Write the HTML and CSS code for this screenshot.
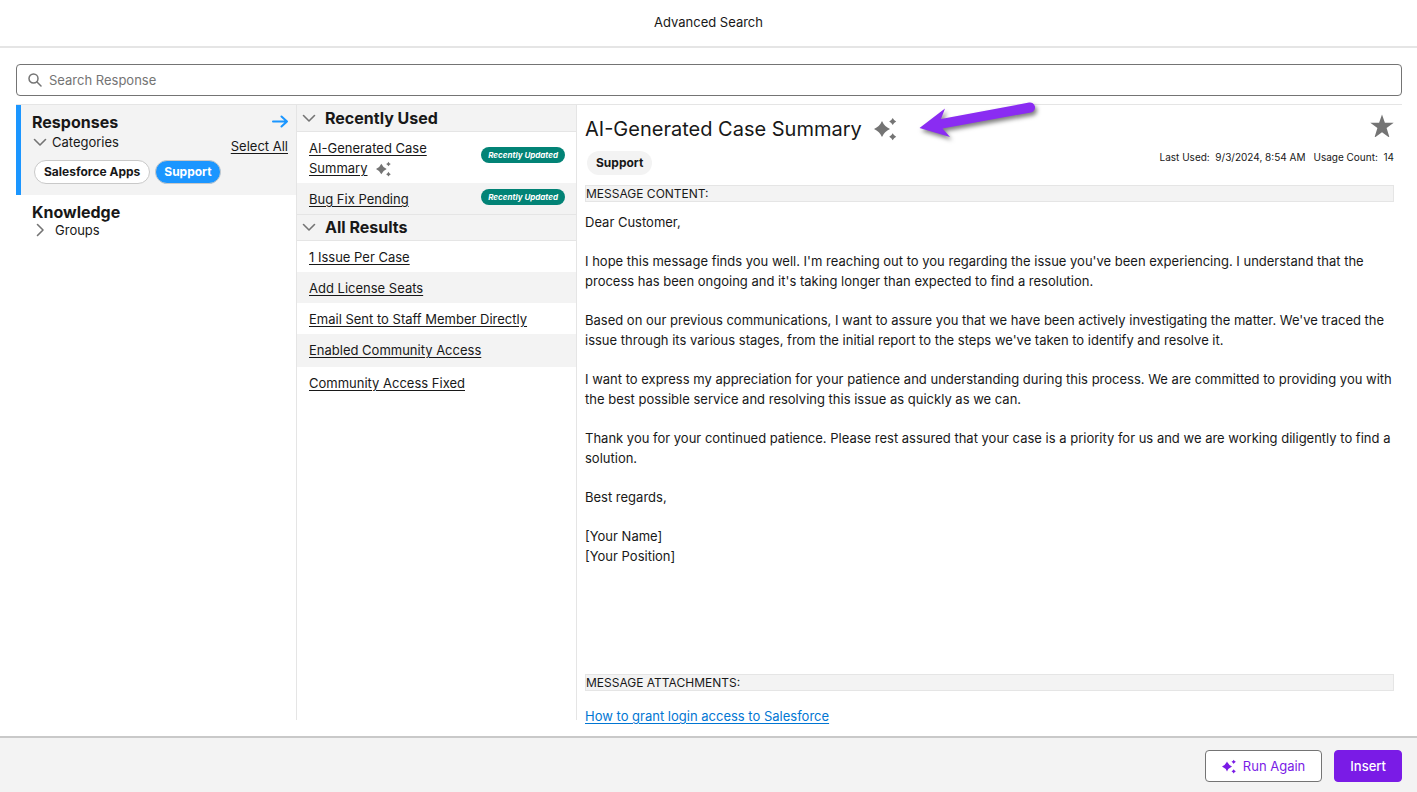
FILE: index.html
```html
<!DOCTYPE html>
<html lang="en">
<head>
<meta charset="utf-8">
<meta name="viewport" content="width=device-width, initial-scale=1">
<title>Advanced Search</title>
<link rel="stylesheet" href="styles.css">
</head>
<body>
<svg class="symbols" aria-hidden="true">
  <symbol id="sparkle" viewBox="0 0 24 24">
    <path d="M8 4Q10.400 9.600 16 12Q10.400 14.400 8 20Q5.600 14.400 0 12Q5.600 9.600 8 4ZM18.700 1Q19.800 3.400 22.200 4.500Q19.800 5.600 18.700 8Q17.600 5.600 15.200 4.500Q17.600 3.400 18.700 1ZM18.700 16.200Q19.800 18.600 22.200 19.700Q19.800 20.800 18.700 23.200Q17.600 20.800 15.200 19.700Q17.600 18.600 18.700 16.200Z"/>
  </symbol>
  <symbol id="chevron" viewBox="0 0 14 14">
    <path d="M1.500 4.500L7 10L12.500 4.500" fill="none" stroke="currentColor" stroke-width="1.600" stroke-linecap="round" stroke-linejoin="round"/>
  </symbol>
</svg>

<header class="header"><h1 class="header-title">Advanced Search</h1></header>

<main class="main">
  <label class="search">
    <svg class="search-icon" viewBox="0 0 14 14" aria-hidden="true"><circle cx="5.500" cy="5.500" r="4.500"/><path d="M9 9L13 13"/></svg>
    <input class="search-input" type="search" placeholder="Search Response" aria-label="Search Response">
  </label>

  <div class="columns">
    <nav class="sources" aria-label="Sources">
      <section class="source source-active">
        <div class="source-head">
          <h2 class="heading">Responses</h2>
          <svg class="go-icon" viewBox="0 0 16 14" aria-hidden="true"><path d="M1 6.500H15M9.500 1.500L15 6.500L9.500 11.500"/></svg>
        </div>
        <div class="source-line">
          <button class="toggle" aria-expanded="true"><svg class="chevron"><use href="#chevron"/></svg>Categories</button>
          <a class="link select-all" href="#">Select All</a>
        </div>
        <div class="chips">
          <button class="chip">Salesforce Apps</button>
          <button class="chip chip-on" aria-pressed="true">Support</button>
        </div>
      </section>
      <section class="source">
        <h2 class="heading">Knowledge</h2>
        <button class="toggle toggle-closed" aria-expanded="false"><svg class="chevron chevron-closed"><use href="#chevron"/></svg>Groups</button>
      </section>
    </nav>

    <section class="results" aria-label="Results">
      <h2 class="group"><button class="group-toggle heading" aria-expanded="true"><svg class="chevron"><use href="#chevron"/></svg>Recently Used</button></h2>
      <ul class="list">
        <li class="item item-tall">
          <div class="item-name"><a class="link" href="#">AI-Generated Case Summary</a><svg class="item-sparkle" aria-hidden="true"><use href="#sparkle"/></svg></div>
          <span class="badge">Recently Updated</span>
        </li>
        <li class="item"><a class="link" href="#">Bug Fix Pending</a><span class="badge">Recently Updated</span></li>
      </ul>
      <h2 class="group group-next"><button class="group-toggle heading" aria-expanded="true"><svg class="chevron"><use href="#chevron"/></svg>All Results</button></h2>
      <ul class="list">
        <li class="item"><a class="link" href="#">1 Issue Per Case</a></li>
        <li class="item"><a class="link" href="#">Add License Seats</a></li>
        <li class="item"><a class="link" href="#">Email Sent to Staff Member Directly</a></li>
        <li class="item item-roomy"><a class="link" href="#">Enabled Community Access</a></li>
        <li class="item"><a class="link" href="#">Community Access Fixed</a></li>
      </ul>
    </section>

    <article class="detail">
      <div class="detail-head">
        <div class="title-group">
          <h2 class="title">AI-Generated Case Summary</h2>
          <svg class="title-sparkle" aria-hidden="true"><use href="#sparkle"/></svg>
          <svg class="pointer" viewBox="0 0 124 46" aria-hidden="true"><path d="M4.500 31L30 11.500L26 22L114 5.500A5 5 0 0 1 116 15.400L27.500 31.500L35 40Z"/></svg>
        </div>
        <button class="favorite" aria-label="Favorite"><svg class="star" viewBox="0 0 24 24"><path d="M12 0.500L14.900 8.700H23.700L16.600 13.900L19.200 22.500Q19.300 23.400 18.500 23L12 18.300L5.500 23Q4.700 23.400 4.800 22.500L7.400 13.900L0.300 8.700H9.100Z"/></svg></button>
      </div>
      <div class="meta">
        <span class="tag">Support</span>
        <p class="usage"><span>Last Used:&nbsp; 9/3/2024, 8:54 AM</span><span>Usage Count:&nbsp; 14</span></p>
      </div>
      <h3 class="bar">MESSAGE CONTENT:</h3>
      <div class="message">
        <p>Dear Customer,</p>
        <p>I hope this message finds you well. I'm reaching out to you regarding the issue you've been experiencing. I understand that the process has been ongoing and it's taking longer than expected to find a resolution.</p>
        <p>Based on our previous communications, I want to assure you that we have been actively investigating the matter. We've traced the issue through its various stages, from the initial report to the steps we've taken to identify and resolve it.</p>
        <p>I want to express my appreciation for your patience and understanding during this process. We are committed to providing you with the best possible service and resolving this issue as quickly as we can.</p>
        <p>Thank you for your continued patience. Please rest assured that your case is a priority for us and we are working diligently to find a solution.</p>
        <p>Best regards,</p>
        <p>[Your Name]<br>[Your Position]</p>
      </div>
      <h3 class="bar">MESSAGE ATTACHMENTS:</h3>
      <a class="attachment" href="#">How to grant login access to Salesforce</a>
    </article>
  </div>
</main>

<footer class="footer">
  <button class="button"><svg class="button-sparkle" aria-hidden="true"><use href="#sparkle"/></svg>Run Again</button>
  <button class="button button-primary">Insert</button>
</footer>
</body>
</html>
```

FILE: styles.css
```css
* { box-sizing: border-box; margin: 0; padding: 0; }

body {
  display: flex;
  flex-direction: column;
  min-height: 100vh;
  font: 13px/20px Inter, "Liberation Sans", sans-serif;
  color: #181818;
  background: #fff;
}

button { font: inherit; color: inherit; background: none; border: 0; cursor: pointer; }
ul { list-style: none; }
.symbols { display: none; }

.header { padding: 12px 16px 14px; border-bottom: 2px solid #e5e5e5; text-align: center; }
.header-title { font-size: 13px; font-weight: 400; line-height: 20px; }

.main { flex: 1; display: flex; flex-direction: column; gap: 8px; padding: 16px 15px 16px 16px; }

.search {
  display: flex;
  align-items: center;
  gap: 7px;
  height: 32px;
  padding: 0 11px;
  border: 1px solid #747474;
  border-radius: 4px;
}
.search-icon { width: 14px; height: 14px; fill: none; stroke: #747474; stroke-width: 1.5; stroke-linecap: round; }
.search-input { flex: 1; border: 0; outline: 0; background: none; font: inherit; color: inherit; }
.search-input::placeholder { color: #747474; opacity: 1; }

.columns {
  flex: 1;
  display: grid;
  grid-template-columns: 281px 280px minmax(0, 1fr);
  border-top: 1px solid #e5e5e5;
}

.heading { font-size: 16px; font-weight: 700; line-height: 20px; }
.link { color: inherit; text-decoration: underline; text-underline-offset: 2px; }
.chevron { flex: none; width: 14px; height: 14px; color: #747474; }
.chevron-closed { transform: rotate(-90deg); }

.sources { border-right: 1px solid #e5e5e5; }
.source { padding: 7px 8px 11px 11px; border-left: 5px solid transparent; }
.source-active { background: #f3f3f3; border-left-color: #1b96ff; }
.source-head { display: flex; justify-content: space-between; align-items: center; }
.source-line { display: flex; justify-content: space-between; align-items: flex-start; }
.go-icon { width: 16px; height: 14px; fill: none; stroke: #1b96ff; stroke-width: 2; stroke-linecap: round; stroke-linejoin: round; }
.toggle { display: flex; align-items: center; gap: 5px; padding-left: 1px; }
.toggle-closed { gap: 8px; line-height: 16px; }
.select-all { padding-top: 4px; }
.chips { display: flex; gap: 5px; padding: 4px 2px 0; }
.chip { height: 24px; padding: 0 9px; border: 1px solid #c9c9c9; border-radius: 12px; background: #fff; font-size: 12px; font-weight: 700; line-height: 20px; }
.chip:first-child { padding: 0 9px; }
.chip-on { padding: 0 8px; background: #1b96ff; color: #fff; }

.results { border-right: 1px solid #e5e5e5; }
.group { padding: 3px 5px; background: #f3f3f3; border-bottom: 1px solid #e5e5e5; }
.group-next { padding-top: 2px; border-top: 1px solid #e5e5e5; }
.group-toggle { display: flex; align-items: center; gap: 9px; width: 100%; }
.item { display: flex; justify-content: space-between; align-items: flex-start; gap: 8px; padding: 6px 11px 5px 12px; }
.item:nth-child(even) { background: #f3f3f3; }
.item-roomy { padding-bottom: 7px; }
.item-name { max-width: 140px; }
.item-sparkle { width: 16px; height: 16px; margin-left: 8px; fill: #747474; vertical-align: -4px; }
.badge { flex: none; padding: 0 7px; border-radius: 8px; background: #028376; color: #fff; font-size: 8px; font-style: italic; font-weight: 700; line-height: 16px; }
.item-tall .badge { margin-top: 9px; }

.detail { display: flex; flex-direction: column; margin-bottom: -6px; padding: 0 8px; }
.detail-head { display: flex; justify-content: space-between; padding-top: 9px; }
.title-group { position: relative; display: flex; align-items: center; gap: 12px; }
.title { font-size: 20px; font-weight: 400; line-height: 30px; }
.title-sparkle { width: 24px; height: 24px; fill: #747474; }
.pointer { position: absolute; left: 100%; top: -17px; width: 124px; height: 46px; margin-left: 17px; fill: #8a2cf2; filter: drop-shadow(2px 3px 2px #00000080); }
.favorite { height: 24px; }
.star { display: block; width: 24px; height: 24px; fill: #747474; }
.meta { display: flex; justify-content: space-between; align-items: flex-start; padding: 7px 0 10px 2px; }
.tag { padding: 0 9px; border-radius: 12px; background: #f3f3f3; font-size: 12px; font-weight: 700; line-height: 24px; }
.usage { display: flex; gap: 8px; font-size: 10px; line-height: 12px; }
.bar { border: 1px solid #e5e5e5; background: #f3f3f3; font-size: 12px; font-weight: 400; line-height: 15px; }
.message { flex: 1; display: flex; flex-direction: column; gap: 19px; padding: 10px 0 19px; }
.attachment { align-self: flex-start; margin-top: 15px; color: #0176d3; text-underline-offset: 2px; }

.footer { display: flex; justify-content: flex-end; gap: 12px; padding: 12px 15px 10px; border-top: 2px solid #c9c9c9; background: #f3f3f3; }
.button { display: flex; align-items: center; gap: 6px; height: 32px; padding: 0 16px; border: 1px solid #747474; border-radius: 4px; background: #fff; color: #7a1be6; }
.button-primary { padding: 0 15px; background: #7a1be6; border-color: #7a1be6; color: #fff; font-weight: 500; }
.button-sparkle { width: 15px; height: 15px; fill: #7a1be6; }
```
